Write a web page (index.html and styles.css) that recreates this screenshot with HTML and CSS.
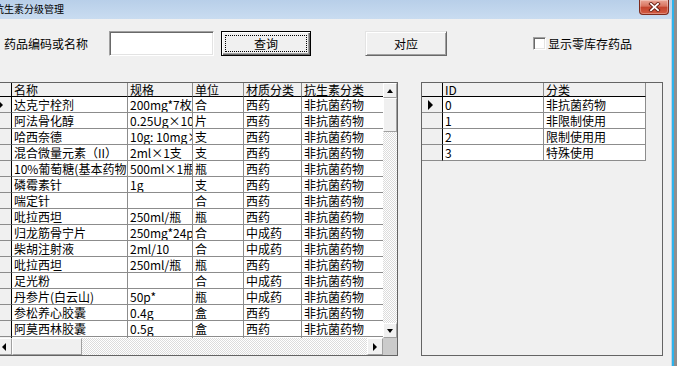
FILE: index.html
```html
<!DOCTYPE html>
<html lang="zh-CN">
  <head>
    <meta charset="UTF-8" />
    <meta name="viewport" content="width=device-width, initial-scale=1.0" />
    <title>抗生素分级管理</title>
    <link rel="stylesheet" href="styles.css">
  </head>
  <body>
    <div class="window">
      <div class="main">
        <div class="titlebar">
          <span class="title">抗生素分级管理</span>
          <button class="close-btn" type="button">
            <svg width="13" height="10" viewBox="0 0 13 10">
              <path d="M3 1.8 L10 8.2 M10 1.8 L3 8.2" stroke="#6a2014" stroke-width="3.6" stroke-linecap="square" />
              <path d="M3 1.8 L10 8.2 M10 1.8 L3 8.2" stroke="#fff" stroke-width="1.8" stroke-linecap="square" />
            </svg>
          </button>
        </div>

        <div class="toolbar">
          <label class="search-label" for="keyword">药品编码或名称</label>
          <input type="text" id="keyword" class="search-input" autocomplete="off">
          <button type="button" class="btn btn-query"><span class="focus-ring">查询</span></button>
          <button type="button" class="btn btn-map">对应</button>
          <label class="check"><input type="checkbox" class="check-box"> 显示零库存药品</label>
        </div>

        <div class="grids">
          <!-- drug list -->
          <div class="grid drug-grid">
            <div class="table">
              <div class="row head">
                <div class="cell ind"></div>
                <div class="cell c-name">名称</div>
                <div class="cell c-spec">规格</div>
                <div class="cell c-unit">单位</div>
                <div class="cell c-type">材质分类</div>
                <div class="cell c-abx">抗生素分类</div>
              </div>
              <div class="row">
                <div class="cell ind"><span class="pointer"></span></div>
                <div class="cell c-name">达克宁栓剂</div>
                <div class="cell c-spec">200mg*7枚/盒</div>
                <div class="cell c-unit">合</div>
                <div class="cell c-type">西药</div>
                <div class="cell c-abx">非抗菌药物</div>
              </div>
              <div class="row">
                <div class="cell ind"></div>
                <div class="cell c-name">阿法骨化醇</div>
                <div class="cell c-spec">0.25Ug×10粒</div>
                <div class="cell c-unit">片</div>
                <div class="cell c-type">西药</div>
                <div class="cell c-abx">非抗菌药物</div>
              </div>
              <div class="row">
                <div class="cell ind"></div>
                <div class="cell c-name">哈西奈德</div>
                <div class="cell c-spec">10g: 10mg×1支</div>
                <div class="cell c-unit">支</div>
                <div class="cell c-type">西药</div>
                <div class="cell c-abx">非抗菌药物</div>
              </div>
              <div class="row">
                <div class="cell ind"></div>
                <div class="cell c-name">混合微量元素（II）</div>
                <div class="cell c-spec">2ml×1支</div>
                <div class="cell c-unit">支</div>
                <div class="cell c-type">西药</div>
                <div class="cell c-abx">非抗菌药物</div>
              </div>
              <div class="row">
                <div class="cell ind"></div>
                <div class="cell c-name">10%葡萄糖(基本药物)</div>
                <div class="cell c-spec">500ml×1瓶</div>
                <div class="cell c-unit">瓶</div>
                <div class="cell c-type">西药</div>
                <div class="cell c-abx">非抗菌药物</div>
              </div>
              <div class="row">
                <div class="cell ind"></div>
                <div class="cell c-name">磷霉素针</div>
                <div class="cell c-spec">1g</div>
                <div class="cell c-unit">支</div>
                <div class="cell c-type">西药</div>
                <div class="cell c-abx">非抗菌药物</div>
              </div>
              <div class="row">
                <div class="cell ind"></div>
                <div class="cell c-name">喘定针</div>
                <div class="cell c-spec"></div>
                <div class="cell c-unit">合</div>
                <div class="cell c-type">西药</div>
                <div class="cell c-abx">非抗菌药物</div>
              </div>
              <div class="row">
                <div class="cell ind"></div>
                <div class="cell c-name">吡拉西坦</div>
                <div class="cell c-spec">250ml/瓶</div>
                <div class="cell c-unit">瓶</div>
                <div class="cell c-type">西药</div>
                <div class="cell c-abx">非抗菌药物</div>
              </div>
              <div class="row">
                <div class="cell ind"></div>
                <div class="cell c-name">归龙筋骨宁片</div>
                <div class="cell c-spec">250mg*24p</div>
                <div class="cell c-unit">合</div>
                <div class="cell c-type">中成药</div>
                <div class="cell c-abx">非抗菌药物</div>
              </div>
              <div class="row">
                <div class="cell ind"></div>
                <div class="cell c-name">柴胡注射液</div>
                <div class="cell c-spec">2ml/10</div>
                <div class="cell c-unit">合</div>
                <div class="cell c-type">中成药</div>
                <div class="cell c-abx">非抗菌药物</div>
              </div>
              <div class="row">
                <div class="cell ind"></div>
                <div class="cell c-name">吡拉西坦</div>
                <div class="cell c-spec">250ml/瓶</div>
                <div class="cell c-unit">瓶</div>
                <div class="cell c-type">西药</div>
                <div class="cell c-abx">非抗菌药物</div>
              </div>
              <div class="row">
                <div class="cell ind"></div>
                <div class="cell c-name">足光粉</div>
                <div class="cell c-spec"></div>
                <div class="cell c-unit">合</div>
                <div class="cell c-type">中成药</div>
                <div class="cell c-abx">非抗菌药物</div>
              </div>
              <div class="row">
                <div class="cell ind"></div>
                <div class="cell c-name">丹参片(白云山)</div>
                <div class="cell c-spec">50p*</div>
                <div class="cell c-unit">瓶</div>
                <div class="cell c-type">中成药</div>
                <div class="cell c-abx">非抗菌药物</div>
              </div>
              <div class="row">
                <div class="cell ind"></div>
                <div class="cell c-name">参松养心胶囊</div>
                <div class="cell c-spec">0.4g</div>
                <div class="cell c-unit">盒</div>
                <div class="cell c-type">西药</div>
                <div class="cell c-abx">非抗菌药物</div>
              </div>
              <div class="row">
                <div class="cell ind"></div>
                <div class="cell c-name">阿莫西林胶囊</div>
                <div class="cell c-spec">0.5g</div>
                <div class="cell c-unit">盒</div>
                <div class="cell c-type">西药</div>
                <div class="cell c-abx">非抗菌药物</div>
              </div>
              <div class="row">
                <div class="cell ind"></div>
                <div class="cell c-name">头孢氨苄胶囊</div>
                <div class="cell c-spec">0.25g</div>
                <div class="cell c-unit">瓶</div>
                <div class="cell c-type">西药</div>
                <div class="cell c-abx">非抗菌药物</div>
              </div>
            </div>

            <div class="vscroll">
              <div class="sb-btn"><span class="arrow up"></span></div>
              <div class="sb-thumb"></div>
              <div class="sb-track"></div>
              <div class="sb-btn"><span class="arrow down"></span></div>
            </div>

            <div class="hscroll">
              <div class="sb-btn"><span class="arrow left"></span></div>
              <div class="sb-thumb"></div>
              <div class="sb-track"></div>
              <div class="sb-btn"><span class="arrow right"></span></div>
            </div>
            <div class="corner"></div>
          </div>

          <!-- grade list -->
          <div class="grid class-grid">
            <div class="row head">
              <div class="cell ind wide"></div>
              <div class="cell c-id">ID</div>
              <div class="cell c-cat">分类</div>
            </div>
            <div class="row">
              <div class="cell ind wide"><span class="pointer"></span></div>
              <div class="cell c-id">0</div>
              <div class="cell c-cat">非抗菌药物</div>
            </div>
            <div class="row">
              <div class="cell ind wide"></div>
              <div class="cell c-id">1</div>
              <div class="cell c-cat">非限制使用</div>
            </div>
            <div class="row">
              <div class="cell ind wide"></div>
              <div class="cell c-id">2</div>
              <div class="cell c-cat">限制使用用</div>
            </div>
            <div class="row">
              <div class="cell ind wide"></div>
              <div class="cell c-id">3</div>
              <div class="cell c-cat">特殊使用</div>
            </div>
          </div>
        </div>
      </div>
      <div class="edge"></div>
    </div>
  </body>
</html>
```

FILE: styles.css
```css
* {
  box-sizing: border-box;
}

:root {
  --face: #f0f0f0;
  --line: #8c8c8c;
  --fixed-line: #000;
  --dither: repeating-conic-gradient(#fff 0 25%, #dcdcdc 0 50%) 0 0 / 2px 2px;
}

body {
  margin: 0;
  background: var(--face);
  font-family: "Noto Sans CJK SC", "Noto Sans", sans-serif;
  font-size: 12px;
  color: #000;
  overflow: hidden;
}

.window {
  display: flex;
  width: 677px;
  height: 366px;
}

.main {
  flex: 1;
  min-width: 0;
  display: flex;
  flex-direction: column;
  overflow: hidden;
}

/* window frame on the right */
.edge {
  width: 6px;
  background: linear-gradient(to right, #c2d3e4 0 1px, #2cb3ec 1px 3px, #8e8e8e 3px);
}

/* title bar */
.titlebar {
  flex: none;
  height: 19px;
  display: flex;
  justify-content: space-between;
  background: linear-gradient(#b8cfe9, #c9dcf0);
}

.title {
  margin-left: -6px;
  font-size: 10px;
  line-height: 18px;
  white-space: nowrap;
}

.close-btn {
  width: 30px;
  height: 15px;
  margin-right: 2px;
  padding: 0;
  display: flex;
  align-items: center;
  justify-content: center;
  border: 1px solid #7e2a1c;
  border-top: 0;
  border-radius: 0 0 4px 4px;
  background: linear-gradient(#eaa696, #d8735f 45%, #c3432d 50%, #d35b42);
  box-shadow: inset 0 0 0 1px rgba(255, 255, 255, 0.3);
}

/* search row */
.toolbar {
  flex: none;
  height: 25px;
  margin: 12px 0 26px;
  padding-left: 4px;
  display: flex;
  align-items: center;
}

.search-label {
  margin-right: 21px;
  line-height: 16px;
  white-space: nowrap;
}

.search-input {
  width: 105px;
  height: 25px;
  margin: 0 7px 0 0;
  padding: 0 3px;
  font: inherit;
  background: #fff;
  border: 1px solid;
  border-color: #a0a0a0 #fff #fff #a0a0a0;
  box-shadow: inset 1px 1px #696969, inset -1px -1px #e3e3e3;
  outline: none;
}

.btn {
  height: 25px;
  padding: 0;
  font: inherit;
  color: #000;
  background: var(--face);
  border: 1px solid;
  border-color: #e3e3e3 #696969 #696969 #e3e3e3;
  box-shadow: inset 1px 1px #fff, inset -1px -1px #a0a0a0;
}

.btn-query {
  width: 90px;
  margin-right: 54px;
  padding: 3px;
  border-color: #000;
  box-shadow: inset 1px 1px #fff, inset -1px -1px #696969, inset -2px -2px #a0a0a0;
}

.focus-ring {
  display: block;
  height: 100%;
  line-height: 15px;
  border: 1px dotted #000;
}

.btn-map {
  width: 82px;
  margin-right: 86px;
}

.check {
  display: flex;
  align-items: center;
  gap: 2px;
  white-space: nowrap;
}

.check-box {
  appearance: none;
  width: 13px;
  height: 13px;
  margin: 0;
  background: #fff;
  border: 1px solid;
  border-color: #a0a0a0 #fff #fff #a0a0a0;
  box-shadow: inset 1px 1px #696969, inset -1px -1px #e3e3e3;
}

/* grids */
.grids {
  display: flex;
  align-items: flex-start;
}

.grid {
  flex: none;
  height: 274px;
  border: 1px solid #646464;
}

.drug-grid {
  width: 403px;
  margin-left: -5px;
  display: grid;
  grid-template-columns: 1fr 14px;
  grid-template-rows: 1fr 17px;
}

.class-grid {
  width: 242px;
  margin-left: 23px;
  background: var(--face);
}

.table {
  overflow: hidden;
  background: #fff;
}

.row {
  display: flex;
  height: 16px;
}

.class-grid .row {
  width: 224px;
}

.row.head {
  height: 14px;
}

.cell {
  flex: none;
  padding-left: 2px;
  line-height: 15px;
  white-space: nowrap;
  overflow: hidden;
  text-overflow: clip;
  background: #fff;
  border-right: 1px solid var(--line);
  border-bottom: 1px solid var(--line);
}

.head .cell {
  line-height: 13px;
  background: var(--face);
  border-bottom-color: var(--fixed-line);
}

.cell.ind {
  width: 16px;
  padding: 0 0 0 2px;
  display: flex;
  align-items: center;
  background: var(--face);
  border-right-color: var(--fixed-line);
}

.cell.ind.wide {
  width: 21px;
  padding-left: 6px;
}

.c-name { width: 116px; }
.c-spec { width: 65px; }
.c-unit { width: 51px; }
.c-type { width: 58px; }
.c-abx { width: 100px; border-right: 0; }
.c-id { width: 101px; }
.c-cat { width: 102px; }

.pointer {
  width: 0;
  height: 0;
  border-left: 5px solid #000;
  border-top: 5px solid transparent;
  border-bottom: 5px solid transparent;
}

/* scroll bars */
.vscroll,
.hscroll {
  display: flex;
  background: var(--dither);
}

.vscroll {
  flex-direction: column;
}

.sb-btn,
.sb-thumb {
  flex: none;
  background: var(--face);
  border: 1px solid;
  border-color: #fff #a0a0a0 #a0a0a0 #fff;
}

.sb-btn {
  display: flex;
  align-items: center;
  justify-content: center;
}

.vscroll .sb-btn { height: 15px; }
.vscroll .sb-thumb { height: 34px; }
.hscroll .sb-btn { width: 16px; }
.hscroll .sb-thumb { width: 70px; }

.sb-track {
  flex: 1;
}

.corner {
  background: #cbcbcb;
}

.arrow {
  width: 0;
  height: 0;
  border: 3px solid transparent;
}

.arrow.up { border-top: 0; border-bottom: 4px solid #000; }
.arrow.down { border-bottom: 0; border-top: 4px solid #000; }
.arrow.left { border-left: 0; border-right: 4px solid #000; border-top-width: 4px; border-bottom-width: 4px; }
.arrow.right { border-right: 0; border-left: 4px solid #000; border-top-width: 4px; border-bottom-width: 4px; }
```
